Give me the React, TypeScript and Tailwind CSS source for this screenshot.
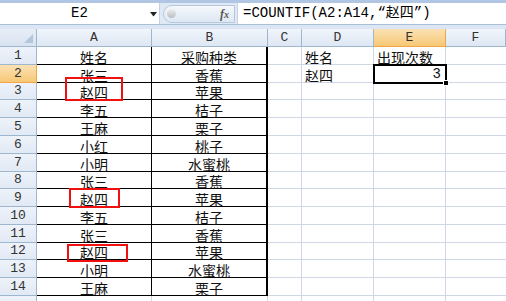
import React from "react";

const rows: [string, string, string, string, string][] = [
  ["姓名", "采购种类", "", "姓名", "出现次数"],
  ["张三", "香蕉", "", "赵四", "3"],
  ["赵四", "苹果", "", "", ""],
  ["李五", "桔子", "", "", ""],
  ["王麻", "栗子", "", "", ""],
  ["小红", "桃子", "", "", ""],
  ["小明", "水蜜桃", "", "", ""],
  ["张三", "香蕉", "", "", ""],
  ["赵四", "苹果", "", "", ""],
  ["李五", "桔子", "", "", ""],
  ["张三", "香蕉", "", "", ""],
  ["赵四", "苹果", "", "", ""],
  ["小明", "水蜜桃", "", "", ""],
  ["王麻", "栗子", "", "", ""],
];

const heights = [18, 18, 17, 18, 18, 18, 18, 17, 18, 18, 18, 17, 18, 18];

const cjk = { fontFamily: '"Noto Sans CJK SC", sans-serif' };
const mono = { fontFamily: '"Liberation Mono", "Noto Sans CJK SC", monospace' };

export default function App() {
  const rowTemplate = ["18px", ...heights.map((h) => `${h}px`), "20px"].join(" ");
  return (
    <div className="w-[506px] h-[301px] overflow-hidden bg-[#dce6f4] flex flex-col">
      {/* formula bar */}
      <div className="h-[3px] shrink-0 bg-[#b1c6e2]" />
      <div className="h-[22px] shrink-0 flex items-stretch bg-white border-b border-[#a9bfd6]">
        <div className="w-[160px] flex items-center relative border-r border-[#c5d3e4]">
          <span className="flex-1 text-center text-[14px] text-black" style={mono}>E2</span>
          <svg width="8" height="5" className="absolute left-[150px] top-[9px]" viewBox="0 0 8 5">
            <path d="M0 0 H7 L3.5 4.5 Z" fill="#222" />
          </svg>
        </div>
        <div className="w-[77px] flex items-center bg-[#dfe9f5]">
          <div className="ml-[3px] h-[18px] w-[72px] rounded-l-[10px] bg-gradient-to-b from-[#f5f8fc] to-[#dde7f3] border border-[#b6c8de] flex items-center">
            <div className="ml-[3px] w-[9px] h-[9px] rounded-full bg-gradient-to-b from-[#f0f0f0] to-[#b8bcc2]" />
            <span className="ml-auto mr-[5px] text-[12px] italic font-bold text-[#555]" style={{ fontFamily: '"Liberation Serif", serif' }}>
              f<span className="text-[10px]">x</span>
            </span>
          </div>
        </div>
        <div className="flex-1 flex items-center border-l border-[#c5d3e4] pl-[5px] text-[14px] text-black whitespace-nowrap" style={mono}>
          =COUNTIF(A2:A14,“赵四”)
        </div>
      </div>
      <div className="h-[4px] shrink-0 bg-[#dce6f4]" />

      {/* sheet */}
      <div
        className="relative grid shrink-0 bg-white"
        style={{ gridTemplateColumns: "37px 115px 116px 34px 72px 72px 60px", gridTemplateRows: rowTemplate }}
      >
        {/* header row */}
        <div className="bg-gradient-to-b from-[#e8eef7] to-[#d8e3f1] border-r border-b border-[#9eb6ce] relative">
          <svg width="9" height="9" className="absolute right-[3px] bottom-[3px]" viewBox="0 0 9 9">
            <path d="M9 0 V9 H0 Z" fill="#b6c6da" />
          </svg>
        </div>
        {["A", "B", "C", "D", "E", "F"].map((c) => (
          <div
            key={c}
            className={
              c === "E"
                ? "flex items-center justify-center bg-gradient-to-b from-[#fbe2b4] to-[#f7c874] border-r border-b border-[#f2a64a] text-[13px] text-[#333]"
                : "flex items-center justify-center bg-gradient-to-b from-[#f1f5fb] to-[#dde7f3] border-r border-b border-[#9eb6ce] text-[13px] text-[#333]"
            }
            style={mono}
          >
            {c}
          </div>
        ))}

        {rows.map((r, i) => {
          const n = i + 1;
          return (
            <React.Fragment key={n}>
              <div
                className={
                  n === 2
                    ? "flex items-center justify-center bg-gradient-to-b from-[#fbe2b4] to-[#f7c874] border-r border-b border-[#f2a64a] text-[13px] text-[#333]"
                    : "flex items-center justify-center bg-gradient-to-b from-[#eef3fa] to-[#e1e9f4] border-r border-b border-[#9eb6ce] text-[13px] text-[#333]"
                }
                style={mono}
              >
                {n}
              </div>
              <div className="flex items-center justify-center border-r border-b border-black text-[14px] leading-none text-[#111] pt-[2px]" style={cjk}>
                {r[0]}
              </div>
              <div className="flex items-center justify-center border-r-2 border-b border-black text-[14px] leading-none text-[#111] pt-[2px]" style={cjk}>
                {r[1]}
              </div>
              <div className="border-r border-b border-[#d0d7e5]" />
              <div className="flex items-center pl-[3px] border-r border-b border-[#d0d7e5] text-[14px] leading-none text-[#111] pt-[2px]" style={cjk}>
                {r[3]}
              </div>
              <div
                className={
                  n === 2
                    ? "flex items-center justify-end pr-[4px] border-r border-b border-[#d0d7e5] text-[14px] leading-none text-[#111]"
                    : "flex items-center pl-[3px] border-r border-b border-[#d0d7e5] text-[14px] leading-none text-[#111] pt-[2px]"
                }
                style={n === 2 ? mono : cjk}
              >
                {r[4]}
              </div>
              <div className="border-b border-[#d0d7e5]" />
            </React.Fragment>
          );
        })}

        {/* partial last row */}
        <div className="bg-gradient-to-b from-[#eef3fa] to-[#e1e9f4] border-r border-[#9eb6ce]" />
        <div className="border-r border-[#d0d7e5]" />
        <div className="border-r border-[#d0d7e5]" />
        <div className="border-r border-[#d0d7e5]" />
        <div className="border-r border-[#d0d7e5]" />
        <div className="border-r border-[#d0d7e5]" />
        <div />

        {/* selected cell E2 */}
        <div className="absolute left-[373px] top-[35px] w-[74px] h-[20px] border-2 border-black pointer-events-none" />
        <div className="absolute left-[443px] top-[51px] w-[6px] h-[6px] bg-black border border-white" />

        {/* red highlight boxes */}
        <div className="absolute left-[65px] top-[48px] w-[58px] h-[24px] border-2 border-[#f01010]" />
        <div className="absolute left-[69px] top-[159px] w-[51px] h-[20px] border-2 border-[#f01010]" />
        <div className="absolute left-[67px] top-[215px] w-[61px] h-[18px] border-2 border-[#f01010]" />
      </div>
    </div>
  );
}
